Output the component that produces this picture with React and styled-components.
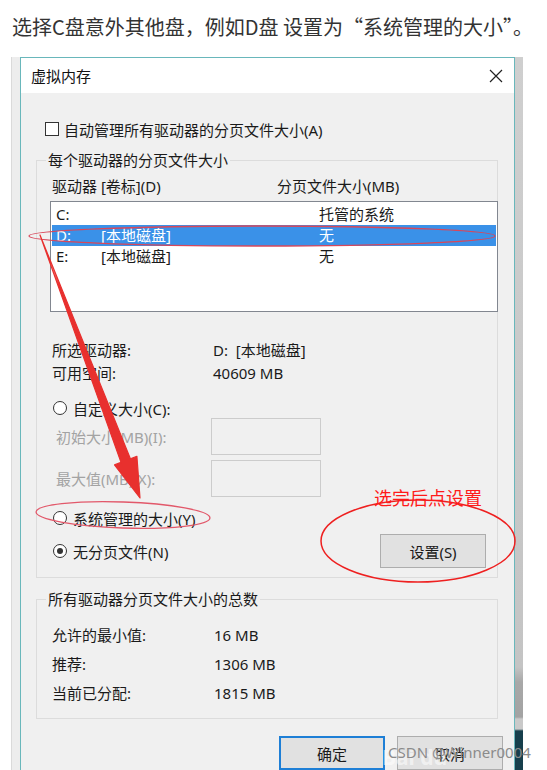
import styled, { createGlobalStyle } from "styled-components";

const GlobalStyle = createGlobalStyle`
  html, body {
    margin: 0;
    padding: 0;
    background: #fff;
  }
  body {
    font-family: "Noto Sans", "Noto Sans CJK SC", sans-serif;
    color: #1a1a1a;
  }
`;

const Page = styled.div`
  position: relative;
  width: 547px;
  height: 770px;
  overflow: hidden;
`;

const Caption = styled.p`
  margin: 0;
  padding: 13px 0 0 12px;
  font-family: "Noto Sans CJK SC", sans-serif;
  font-size: 20px;
  line-height: 28px;
  color: #333;
  white-space: nowrap;
`;

const Shot = styled.div`
  display: flex;
  height: 713px;
  margin: 16px 0 0 11px;
  overflow: hidden;
`;

const BackStrip = styled.div`
  width: 9px;
  box-sizing: border-box;
  border-left: 1px solid #dadada;
  background: #ededed;
`;

const SideStrip = styled.div`
  width: 8px;
  background: linear-gradient(
    to bottom,
    #cfcfcf 0,
    #c4c4c4 610px,
    #a8a8a8 625px,
    #a3a3a3 660px,
    #c9c9c9 662px,
    #c9c9c9 672px,
    #173f4c 674px
  );
`;

const Dialog = styled.div`
  width: 495px;
  box-sizing: border-box;
  border: 1px solid #69b7bb;
  border-bottom: none;
  background: #f0f0f0;
  display: flex;
  flex-direction: column;
`;

const TitleBar = styled.div`
  height: 37px;
  background: #fff;
  display: flex;
  align-items: center;
  justify-content: space-between;
  padding: 0 11px 0 10px;
  font-size: 15px;
  color: #111;
`;

const Body = styled.div`
  padding: 0 16px 0 15px;
  display: flex;
  flex-direction: column;
  font-size: 15px;
`;

const CheckRow = styled.label`
  display: flex;
  align-items: center;
  gap: 5px;
  height: 20px;
  margin: 26px 0 0 9px;
`;

const Box = styled.span`
  width: 14px;
  height: 14px;
  box-sizing: border-box;
  border: 1px solid #333;
  background: #fff;
`;

const Group = styled.fieldset`
  margin: 11px 0 0;
  padding: 0;
  border: 1px solid #dcdcdc;
  min-width: 0;
`;

const Legend = styled.legend`
  margin-left: 9px;
  padding: 0 2px;
  font-size: 15px;
  line-height: 20px;
`;

const GroupInner = styled.div`
  padding: ${(p) => p.$pad};
`;

const HeaderRow = styled.div`
  display: grid;
  grid-template-columns: 225px 1fr;
  margin-top: 6px;
  padding-left: 2px;
  line-height: 20px;
`;

const ListBox = styled.div`
  height: 111px;
  box-sizing: border-box;
  margin: 5px -1px 0 0;
  padding-top: 2px;
  border: 1px solid #828790;
  background: #fff;
`;

const ListRow = styled.div`
  display: grid;
  grid-template-columns: 45px 218px 1fr;
  height: 21px;
  line-height: 21px;
  margin: 0 1px;
  padding-left: 4px;
  background: ${(p) => (p.$selected ? "#3a91e8" : "transparent")};
  color: ${(p) => (p.$selected ? "#fff" : "#1a1a1a")};
`;

const InfoGrid = styled.div`
  display: grid;
  grid-template-columns: ${(p) => p.$col}px 1fr;
  margin-top: ${(p) => p.$top}px;
  padding-left: ${(p) => p.$left}px;
  line-height: ${(p) => p.$line}px;
`;

const RadioRow = styled.label`
  display: flex;
  align-items: center;
  gap: 6px;
  height: 20px;
  margin-top: ${(p) => p.$top}px;
  padding-left: 3px;
`;

const Radio = styled.span`
  width: 14px;
  height: 14px;
  box-sizing: border-box;
  border: 1px solid #333;
  border-radius: 50%;
  background: #fff;
  display: flex;
  align-items: center;
  justify-content: center;

  &::after {
    content: "";
    display: ${(p) => (p.$checked ? "block" : "none")};
    width: 6px;
    height: 6px;
    border-radius: 50%;
    background: #333;
  }
`;

const SizeRow = styled.div`
  display: grid;
  grid-template-columns: 155px 110px;
  align-items: center;
  height: 37px;
  margin-top: ${(p) => p.$top}px;
  padding-left: 6px;
  color: #a3a3a3;
`;

const Field = styled.span`
  height: 37px;
  box-sizing: border-box;
  border: 1px solid #cccccc;
  background: #f0f0f0;
`;

const ActionRow = styled.div`
  display: flex;
  align-items: center;
  justify-content: space-between;
  height: 34px;
  margin-top: 6px;
  padding-right: 11px;
`;

const Button = styled.button`
  width: 106px;
  height: 34px;
  box-sizing: border-box;
  border: ${(p) => (p.$focused ? "2px solid #1e7fd6" : "1px solid #adadad")};
  background: #e1e1e1;
  font-family: inherit;
  font-size: 15px;
  color: #1a1a1a;
  padding: 0;
`;

const ButtonRow = styled.div`
  display: flex;
  justify-content: flex-end;
  gap: 12px;
  margin: 17px -5px 0 0;
`;

const Overlay = styled.svg`
  position: absolute;
  left: 0;
  top: 0;
  pointer-events: none;
`;

const Note = styled.span`
  position: absolute;
  left: 374px;
  top: 485px;
  font-size: 18px;
  line-height: 26px;
  color: #ff1a1a;
  white-space: nowrap;
`;

const Watermark = styled.span`
  position: absolute;
  left: 388px;
  top: 741px;
  font-size: 15px;
  line-height: 22px;
  color: #8b8b8b;
  white-space: nowrap;
`;

const BaiduMark = styled.span`
  position: absolute;
  left: 382px;
  top: 745px;
  font-size: 21px;
  font-weight: 700;
  line-height: 24px;
  color: rgba(255, 255, 255, 0.55);
  white-space: nowrap;
`;

function CloseIcon() {
  return (
    <svg width="14" height="14" viewBox="0 0 14 14">
      <path d="M1 1 L13 13 M13 1 L1 13" stroke="#222" strokeWidth="1.2" />
    </svg>
  );
}

const drives = [
  { id: "C:", label: "", size: "托管的系统" },
  { id: "D:", label: "[本地磁盘]", size: "无", selected: true },
  { id: "E:", label: "[本地磁盘]", size: "无" },
];

export default function App() {
  return (
    <Page>
      <GlobalStyle />
      <Caption>选择C盘意外其他盘，例如D盘 设置为“系统管理的大小”。</Caption>
      <Shot>
        <BackStrip />
        <Dialog>
          <TitleBar>
            <span>虚拟内存</span>
            <CloseIcon />
          </TitleBar>
          <Body>
            <CheckRow>
              <Box />
              自动管理所有驱动器的分页文件大小(A)
            </CheckRow>

            <Group>
              <Legend>每个驱动器的分页文件大小</Legend>
              <GroupInner $pad="0 0 9px 13px">
                <HeaderRow>
                  <span>驱动器 [卷标](D)</span>
                  <span>分页文件大小(MB)</span>
                </HeaderRow>
                <ListBox>
                  {drives.map((d) => (
                    <ListRow key={d.id} $selected={d.selected}>
                      <span>{d.id}</span>
                      <span>{d.label}</span>
                      <span>{d.size}</span>
                    </ListRow>
                  ))}
                </ListBox>

                <InfoGrid $col={161} $top={27} $left={2} $line={23}>
                  <span>所选驱动器:</span>
                  <span>D:&nbsp;&nbsp;[本地磁盘]</span>
                  <span>可用空间:</span>
                  <span>40609 MB</span>
                </InfoGrid>

                <RadioRow $top={13}>
                  <Radio />
                  自定义大小(C):
                </RadioRow>
                <SizeRow $top={0}>
                  <span>初始大小(MB)(I):</span>
                  <Field />
                </SizeRow>
                <SizeRow $top={5}>
                  <span>最大值(MB)(X):</span>
                  <Field />
                </SizeRow>
                <RadioRow $top={11}>
                  <Radio />
                  系统管理的大小(Y)
                </RadioRow>
                <ActionRow>
                  <RadioRow $top={0}>
                    <Radio $checked />
                    无分页文件(N)
                  </RadioRow>
                  <Button>设置(S)</Button>
                </ActionRow>
              </GroupInner>
            </Group>

            <Group>
              <Legend>所有驱动器分页文件大小的总数</Legend>
              <InfoGrid $col={162} $top={12} $left={15} $line={29}>
                <span>允许的最小值:</span>
                <span>16 MB</span>
                <span>推荐:</span>
                <span>1306 MB</span>
                <span>当前已分配:</span>
                <span>1815 MB</span>
              </InfoGrid>
              <GroupInner $pad="0 0 10px 0" />
            </Group>

            <ButtonRow>
              <Button $focused>确定</Button>
              <Button>取消</Button>
            </ButtonRow>
          </Body>
        </Dialog>
        <SideStrip />
      </Shot>

      <Overlay width="547" height="770" viewBox="0 0 547 770">
        <defs>
          <linearGradient id="arrowFill" x1="0" y1="236" x2="0" y2="285" gradientUnits="userSpaceOnUse">
            <stop offset="0" stopColor="#e8302e" stopOpacity="0" />
            <stop offset="0.5" stopColor="#e8302e" stopOpacity="0.35" />
            <stop offset="1" stopColor="#e8302e" stopOpacity="1" />
          </linearGradient>
        </defs>
        <ellipse cx="262" cy="236" rx="233" ry="10" fill="none" stroke="#d8475a" strokeWidth="1.3" />
        <polygon
          points="40,235 130.4,458.8 136.9,456.3 140,498 114.5,464.9 121,462.4"
          fill="url(#arrowFill)"
          stroke="#e8302e"
          strokeWidth="1.2"
          strokeLinejoin="round"
        />
        <ellipse
          cx="123"
          cy="515"
          rx="87"
          ry="13"
          fill="none"
          stroke="#e2586a"
          strokeWidth="1.3"
          transform="rotate(2 123 515)"
        />
        <ellipse cx="418" cy="541" rx="97" ry="41" fill="none" stroke="#ee2020" strokeWidth="1.5" />
      </Overlay>
      <Note>选完后点设置</Note>
      <BaiduMark>Bai du</BaiduMark>
      <Watermark>CSDN @Winner0004</Watermark>
    </Page>
  );
}
